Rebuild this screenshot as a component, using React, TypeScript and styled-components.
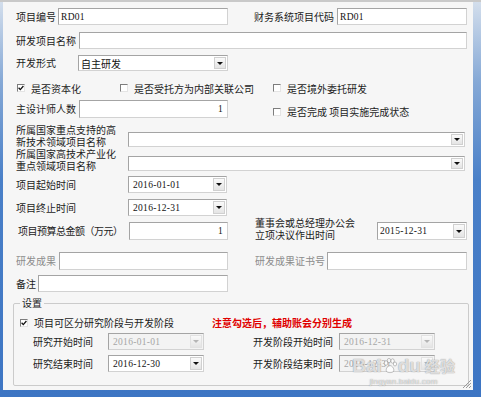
import React from "react";
import styled, { createGlobalStyle } from "styled-components";

const GlobalStyle = createGlobalStyle`
  html, body {
    margin: 0;
    padding: 0;
    background: #fff;
  }
  body {
    font-family: "Noto Sans CJK SC", "Noto Sans", sans-serif;
  }
  * {
    box-sizing: border-box;
  }
`;

const Window = styled.div`
  position: relative;
  width: 481px;
  height: 397px;
  display: flex;
  flex-direction: column;
  padding: 0 8px 7px 3px;
  border-top: 2px solid #c9c9c9;
  background: linear-gradient(to bottom, #d3deec 0%, #86a9d6 20%, #4a80c8 45%, #3d75c3 100%);
  overflow: hidden;
`;

const Panel = styled.div`
  position: relative;
  flex: 1;
  display: flex;
  flex-direction: column;
  padding-left: 13px;
  background: #f6f6f6;
`;

const Row = styled.div<{ $mt: number; $h: number; $align?: string }>`
  display: flex;
  align-items: ${({ $align }) => $align ?? "center"};
  height: ${({ $h }) => $h}px;
  margin-top: ${({ $mt }) => $mt}px;
`;

const Label = styled.span<{ $w: number; $muted?: boolean; $pl?: number; $ml?: number; $ls?: number; $mt?: number }>`
  flex: none;
  width: ${({ $w }) => $w}px;
  margin-left: ${({ $ml }) => $ml ?? 0}px;
  margin-top: ${({ $mt }) => $mt ?? 0}px;
  padding-left: ${({ $pl }) => $pl ?? 0}px;
  font-size: 10px;
  line-height: 12px;
  letter-spacing: ${({ $ls }) => $ls ?? 0}px;
  color: ${({ $muted }) => ($muted ? "#8c8c8c" : "#1c1c1c")};
  white-space: nowrap;
`;

const Field = styled.div<{ $w: number; $h?: number; $right?: boolean; $disabled?: boolean; $ml?: number; $end?: boolean }>`
  flex: none;
  display: flex;
  align-items: center;
  justify-content: ${({ $right }) => ($right ? "flex-end" : "flex-start")};
  align-self: ${({ $end }) => ($end ? "flex-end" : "auto")};
  width: ${({ $w }) => $w}px;
  height: ${({ $h }) => $h ?? 17}px;
  margin-left: ${({ $ml }) => $ml ?? 0}px;
  padding: 0 1px 0 2px;
  padding-right: ${({ $right }) => ($right ? 4 : 1)}px;
  background: ${({ $disabled }) => ($disabled ? "#f3f3f3" : "#fff")};
  border: 1px solid #a4a4a4;
  border-right-color: #d2d2d2;
  border-bottom-color: #d2d2d2;
  font-family: "Liberation Serif", "Noto Sans CJK SC", serif;
  font-size: 9.5px;
  letter-spacing: 0.3px;
  color: ${({ $disabled }) => ($disabled ? "#a6a6a6" : "#111")};
  white-space: nowrap;
`;

const ComboText = styled.span<{ $cjk?: boolean; $pl?: number }>`
  padding-left: ${({ $pl }) => $pl ?? 0}px;
  font-family: ${({ $cjk }) => ($cjk ? `"Noto Sans CJK SC", sans-serif` : "inherit")};
  font-size: ${({ $cjk }) => ($cjk ? "10px" : "inherit")};
  letter-spacing: ${({ $cjk }) => ($cjk ? "0" : "inherit")};
`;

const Arrow = styled.span<{ $disabled?: boolean }>`
  margin-left: auto;
  width: 12px;
  height: calc(100% - 2px);
  display: flex;
  align-items: center;
  justify-content: center;
  background: linear-gradient(to bottom, #fafafa, #e4e4e4);
  border: 1px solid ${({ $disabled }) => ($disabled ? "#e2e2e2" : "#d0d0d0")};
  &::after {
    content: "";
    border-left: 3px solid transparent;
    border-right: 3px solid transparent;
    border-top: 3px solid ${({ $disabled }) => ($disabled ? "#b5b5b5" : "#111")};
  }
`;

const CheckItem = styled.label<{ $w?: number; $ml?: number; $end?: boolean }>`
  flex: none;
  display: flex;
  align-items: center;
  gap: 6px;
  width: ${({ $w }) => ($w ? `${$w}px` : "auto")};
  margin-left: ${({ $ml }) => $ml ?? 0}px;
  align-self: ${({ $end }) => ($end ? "flex-end" : "auto")};
  margin-bottom: ${({ $end }) => ($end ? 1 : 0)}px;
  font-size: 10px;
  line-height: 11px;
  color: #1c1c1c;
  white-space: nowrap;
`;

const Box = styled.span`
  flex: none;
  width: 8px;
  height: 8px;
  display: flex;
  align-items: center;
  justify-content: center;
  background: #fff;
  border: 1px solid #7d7d7d;
  border-right-color: #e4e4e4;
  border-bottom-color: #e4e4e4;
`;

const Group = styled.fieldset`
  display: flex;
  flex-direction: column;
  width: 456px;
  margin: 4px 0 0 -3px;
  padding: 0 0 13px 6px;
  min-width: 0;
  border: 1px solid #cbcbcb;
  border-radius: 2px;
`;

const Legend = styled.legend`
  padding: 0 2px;
  font-size: 10px;
  line-height: 14px;
  color: #1c1c1c;
`;

const Note = styled.span`
  font-size: 10px;
  line-height: 11px;
  font-weight: bold;
  color: #e00000;
  white-space: nowrap;
`;

const Watermark = styled.div`
  position: absolute;
  right: 18px;
  bottom: 3px;
  display: flex;
  flex-direction: column;
  align-items: center;
  color: rgba(255, 255, 255, 0.7);
  text-shadow: 0 0 1px rgba(110, 110, 110, 0.5), 0 0 1px rgba(110, 110, 110, 0.5);
  pointer-events: none;
`;

const MarkTop = styled.div`
  display: flex;
  align-items: center;
  font-family: "Liberation Sans", sans-serif;
  font-size: 19px;
  font-weight: bold;
  line-height: 22px;
  gap: 1px;
`;

const MarkCn = styled.span`
  font-family: "Noto Sans CJK SC", sans-serif;
  font-size: 15px;
  margin-left: 3px;
`;

const MarkUrl = styled.div`
  font-family: "Liberation Sans", sans-serif;
  font-size: 8px;
  line-height: 10px;
  letter-spacing: 0.2px;
`;

const Grip = styled.svg`
  position: absolute;
  right: 1px;
  bottom: 1px;
`;

const Check = () => (
  <svg width="6" height="6" viewBox="0 0 6 6">
    <path d="M0.6 2.8 L2.3 4.6 L5.4 1" fill="none" stroke="#111" strokeWidth="1.3" />
  </svg>
);

const CheckBox = ({ on, children, ...rest }: { on?: boolean; children: React.ReactNode; $w?: number; $ml?: number; $end?: boolean }) => (
  <CheckItem {...rest}>
    <Box>{on && <Check />}</Box>
    {children}
  </CheckItem>
);

type ComboProps = { w: number; h?: number; value?: string; cjk?: boolean; disabled?: boolean; ml?: number; end?: boolean; pl?: number };

const Combo = ({ w, h, value, cjk, disabled, ml, end, pl }: ComboProps) => (
  <Field $w={w} $h={h} $disabled={disabled} $ml={ml} $end={end}>
    <ComboText $cjk={cjk} $pl={pl}>{value}</ComboText>
    <Arrow $disabled={disabled} />
  </Field>
);

const App = () => {
  return (
    <>
      <GlobalStyle />
      <Window>
        <Panel>
          <Row $mt={6} $h={17}>
            <Label $w={42}>项目编号</Label>
            <Field $w={170}>RD01</Field>
            <Label $w={83} $ml={26}>财务系统项目代码</Label>
            <Field $w={130}>RD01</Field>
          </Row>
          <Row $mt={7} $h={17}>
            <Label $w={63}>研发项目名称</Label>
            <Field $w={388} />
          </Row>
          <Row $mt={6} $h={16}>
            <Label $w={62}>开发形式</Label>
            <Combo w={150} h={16} value="自主研发" cjk />
          </Row>
          <Row $mt={12} $h={10}>
            <CheckBox on $w={103} $ml={1}>是否资本化</CheckBox>
            <CheckBox $w={153}>是否受托方为内部关联公司</CheckBox>
            <CheckBox>是否境外委托研发</CheckBox>
          </Row>
          <Row $mt={7} $h={18}>
            <Label $w={63}>主设计师人数</Label>
            <Field $w={149} $h={18} $right>1</Field>
            <CheckBox $ml={45} $end>是否完成 项目实施完成状态</CheckBox>
          </Row>
          <Row $mt={6} $h={23} $align="flex-start">
            <Label $w={112}>所属国家重点支持的高<br />新技术领域项目名称</Label>
            <Combo w={337} h={15} end />
          </Row>
          <Row $mt={1} $h={23} $align="flex-start">
            <Label $w={112}>所属国家高技术产业化<br />重点领域项目名称</Label>
            <Combo w={337} h={15} end />
          </Row>
          <Row $mt={5} $h={17}>
            <Label $w={112}>项目起始时间</Label>
            <Combo w={99} value="2016-01-01" pl={2} />
          </Row>
          <Row $mt={6} $h={17}>
            <Label $w={112}>项目终止时间</Label>
            <Combo w={99} value="2016-12-31" pl={2} />
          </Row>
          <Row $mt={2} $h={22}>
            <Label $w={113} $pl={2} $ls={-0.5} $mt={4}>项目预算总金额（万元）</Label>
            <Field $w={99} $h={18} $right $end>1</Field>
            <Label $w={122} $ml={27}>董事会或总经理办公会<br />立项决议作出时间</Label>
            <Combo w={90} h={18} value="2015-12-31" end />
          </Row>
          <Row $mt={12} $h={18}>
            <Label $w={43} $muted>研发成果</Label>
            <Field $w={169} $h={18} />
            <Label $w={72} $ml={27} $muted>研发成果证书号</Label>
            <Field $w={140} $h={18} />
          </Row>
          <Row $mt={5} $h={17}>
            <Label $w={22}>备注</Label>
            <Field $w={190} />
          </Row>
          <Group>
            <Legend>设置</Legend>
            <Row $mt={8} $h={9}>
              <CheckBox on $w={192}>项目可区分研究阶段与开发阶段</CheckBox>
              <Note>注意勾选后，辅助账会分别生成</Note>
            </Row>
            <Row $mt={6} $h={17}>
              <Label $w={75} $ml={13}>研究开始时间</Label>
              <Combo w={96} value="2016-01-01" disabled pl={2} />
              <Label $w={86} $ml={49}>开发阶段开始时间</Label>
              <Combo w={96} value="2016-12-31" disabled pl={2} />
            </Row>
            <Row $mt={5} $h={17}>
              <Label $w={75} $ml={13}>研究结束时间</Label>
              <Combo w={96} value="2016-12-30" pl={2} />
              <Label $w={86} $ml={49}>开发阶段结束时间</Label>
              <Combo w={96} value="2016-12-31" disabled pl={2} />
            </Row>
          </Group>
          <Watermark>
            <MarkTop>
              Bai
              <svg width="14" height="16" viewBox="0 0 14 16">
                <g fill="rgba(255,255,255,0.8)" stroke="rgba(110,110,110,0.5)" strokeWidth="0.8">
                  <ellipse cx="3" cy="5" rx="1.8" ry="2.3" />
                  <ellipse cx="6" cy="2.6" rx="1.7" ry="2.2" />
                  <ellipse cx="9.6" cy="3" rx="1.7" ry="2.2" />
                  <ellipse cx="12" cy="6" rx="1.6" ry="2" />
                  <path d="M7 7.5 C4 8 2.5 11.5 3.5 13.5 C5 15 9 15 10.5 13.5 C11.5 11.5 10 8 7 7.5 Z" />
                </g>
              </svg>
              du
              <MarkCn>经验</MarkCn>
            </MarkTop>
            <MarkUrl>jingyan.baidu.com</MarkUrl>
          </Watermark>
          <Grip width="11" height="11" viewBox="0 0 11 11">
            <g stroke="#9a9a9a" strokeWidth="1">
              <line x1="10" y1="2" x2="2" y2="10" />
              <line x1="10" y1="5" x2="5" y2="10" />
              <line x1="10" y1="8" x2="8" y2="10" />
            </g>
          </Grip>
        </Panel>
      </Window>
    </>
  );
};

export default App;
